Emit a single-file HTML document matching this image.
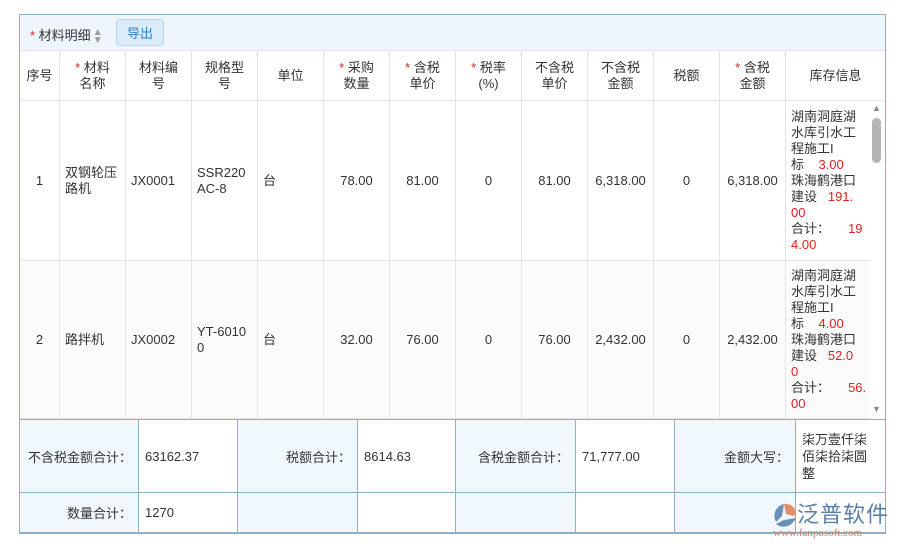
<!DOCTYPE html>
<html><head><meta charset="utf-8"><style>
*{margin:0;padding:0;box-sizing:border-box}
body{width:900px;height:547px;background:#fff;font-family:"Liberation Sans","Noto Sans CJK SC",sans-serif;font-size:13px;color:#333;position:relative;overflow:hidden}
.c{position:absolute;display:flex;align-items:center;padding:0 5px;line-height:16px;border-right:1px solid #e4e4e4;border-bottom:1px solid #e4e4e4}
.h{justify-content:center;text-align:center;top:51px;height:50px}
.r{color:#d22}
.s{color:#d22}
.ct{justify-content:center;text-align:center}
.f{position:absolute;display:flex;align-items:center;padding:0 6px;border-right:1px solid #8fb0c4;border-bottom:1px solid #8fb0c4}
.fl{background:#f0f7fd;justify-content:flex-end}
</style></head><body>
<div style="position:absolute;left:19px;top:14px;width:867px;height:520px;border:1px solid #8fb0c4"></div>
<div style="position:absolute;left:20px;top:15px;width:865px;height:36px;background:#eef5fd;border-bottom:1px solid #e4e4e4"></div>
<div style="position:absolute;left:30px;top:25px;font-size:13px"><span class="s">*</span> 材料明细<span style="color:#999;font-size:10px;display:inline-block;width:10px;line-height:8px;vertical-align:middle;margin-left:2px">▲<br>▼</span></div>
<div style="position:absolute;left:116px;top:19px;width:48px;height:27px;border:1px solid #b9d4ea;background:#dcebf8;border-radius:4px;color:#2f7fc9;display:flex;align-items:center;justify-content:center">导出</div>

<div class="c h" style="left:20px;width:40px"><div>序号</div></div>
<div class="c h" style="left:60px;width:66px"><div><span class="s">*</span> 材料<br>名称</div></div>
<div class="c h" style="left:126px;width:66px"><div>材料编<br>号</div></div>
<div class="c h" style="left:192px;width:66px"><div>规格型<br>号</div></div>
<div class="c h" style="left:258px;width:66px"><div>单位</div></div>
<div class="c h" style="left:324px;width:66px"><div><span class="s">*</span> 采购<br>数量</div></div>
<div class="c h" style="left:390px;width:66px"><div><span class="s">*</span> 含税<br>单价</div></div>
<div class="c h" style="left:456px;width:66px"><div><span class="s">*</span> 税率<br>(%)</div></div>
<div class="c h" style="left:522px;width:66px"><div>不含税<br>单价</div></div>
<div class="c h" style="left:588px;width:66px"><div>不含税<br>金额</div></div>
<div class="c h" style="left:654px;width:66px"><div>税额</div></div>
<div class="c h" style="left:720px;width:66px"><div><span class="s">*</span> 含税<br>金额</div></div>
<div class="c h" style="left:786px;width:99px;border-right:none"><div>库存信息</div></div>

<!-- row1 -->
<div class="c ct" style="left:20px;top:101px;width:40px;height:160px"><div>1</div></div>
<div class="c" style="left:60px;top:101px;width:66px;height:160px"><div>双钢轮压<br>路机</div></div>
<div class="c" style="left:126px;top:101px;width:66px;height:160px"><div>JX0001</div></div>
<div class="c" style="left:192px;top:101px;width:66px;height:160px"><div>SSR220<br>AC-8</div></div>
<div class="c" style="left:258px;top:101px;width:66px;height:160px"><div>台</div></div>
<div class="c ct" style="left:324px;top:101px;width:66px;height:160px"><div>78.00</div></div>
<div class="c ct" style="left:390px;top:101px;width:66px;height:160px"><div>81.00</div></div>
<div class="c ct" style="left:456px;top:101px;width:66px;height:160px"><div>0</div></div>
<div class="c ct" style="left:522px;top:101px;width:66px;height:160px"><div>81.00</div></div>
<div class="c ct" style="left:588px;top:101px;width:66px;height:160px"><div>6,318.00</div></div>
<div class="c ct" style="left:654px;top:101px;width:66px;height:160px"><div>0</div></div>
<div class="c ct" style="left:720px;top:101px;width:66px;height:160px"><div>6,318.00</div></div>
<div class="c" style="left:786px;top:101px;width:84px;height:160px;border-right:none"><div style="white-space:nowrap">湖南洞庭湖<br>水库引水工<br>程施工I<br>标&nbsp;&nbsp;&nbsp;&nbsp;<span class="r">3.00</span><br>珠海鹤港口<br>建设&nbsp;&nbsp;&nbsp;<span class="r">191.<br>00</span><br>合计：&nbsp;&nbsp;&nbsp;&nbsp;&nbsp;<span class="r">19<br>4.00</span></div></div>

<!-- row2 -->
<div style="position:absolute;left:20px;top:261px;width:850px;height:158px;background:#fbfbfb"></div>
<div class="c ct" style="left:20px;top:261px;width:40px;height:158px"><div>2</div></div>
<div class="c" style="left:60px;top:261px;width:66px;height:158px"><div>路拌机</div></div>
<div class="c" style="left:126px;top:261px;width:66px;height:158px"><div>JX0002</div></div>
<div class="c" style="left:192px;top:261px;width:66px;height:158px"><div>YT-6010<br>0</div></div>
<div class="c" style="left:258px;top:261px;width:66px;height:158px"><div>台</div></div>
<div class="c ct" style="left:324px;top:261px;width:66px;height:158px"><div>32.00</div></div>
<div class="c ct" style="left:390px;top:261px;width:66px;height:158px"><div>76.00</div></div>
<div class="c ct" style="left:456px;top:261px;width:66px;height:158px"><div>0</div></div>
<div class="c ct" style="left:522px;top:261px;width:66px;height:158px"><div>76.00</div></div>
<div class="c ct" style="left:588px;top:261px;width:66px;height:158px"><div>2,432.00</div></div>
<div class="c ct" style="left:654px;top:261px;width:66px;height:158px"><div>0</div></div>
<div class="c ct" style="left:720px;top:261px;width:66px;height:158px"><div>2,432.00</div></div>
<div class="c" style="left:786px;top:261px;width:84px;height:158px;border-right:none"><div style="white-space:nowrap">湖南洞庭湖<br>水库引水工<br>程施工I<br>标&nbsp;&nbsp;&nbsp;&nbsp;<span class="r">4.00</span><br>珠海鹤港口<br>建设&nbsp;&nbsp;&nbsp;<span class="r">52.0<br>0</span><br>合计：&nbsp;&nbsp;&nbsp;&nbsp;&nbsp;<span class="r">56.<br>00</span></div></div>

<!-- scrollbar -->
<div style="position:absolute;left:870px;top:101px;width:15px;height:318px;background:#fff"></div>
<div style="position:absolute;left:872px;top:103px;color:#888;font-size:9px">▲</div>
<div style="position:absolute;left:872px;top:404px;color:#888;font-size:9px">▼</div>
<div style="position:absolute;left:872px;top:118px;width:9px;height:45px;background:#b5b5b5;border-radius:5px"></div>

<!-- footer -->
<div style="position:absolute;left:20px;top:419px;width:865px;height:1px;background:#8fb0c4"></div>
<div class="f fl" style="left:20px;top:420px;width:119px;height:73px">不含税金额合计：</div>
<div class="f" style="left:139px;top:420px;width:99px;height:73px">63162.37</div>
<div class="f fl" style="left:238px;top:420px;width:120px;height:73px">税额合计：</div>
<div class="f" style="left:358px;top:420px;width:98px;height:73px">8614.63</div>
<div class="f fl" style="left:456px;top:420px;width:120px;height:73px">含税金额合计：</div>
<div class="f" style="left:576px;top:420px;width:99px;height:73px">71,777.00</div>
<div class="f fl" style="left:675px;top:420px;width:121px;height:73px">金额大写：</div>
<div class="f" style="left:796px;top:420px;width:89px;height:73px;line-height:17px;border-right:none">柒万壹仟柒佰柒拾柒圆整</div>
<div class="f fl" style="left:20px;top:493px;width:119px;height:40px">数量合计：</div>
<div class="f" style="left:139px;top:493px;width:99px;height:40px">1270</div>
<div class="f fl" style="left:238px;top:493px;width:120px;height:40px"></div>
<div class="f" style="left:358px;top:493px;width:98px;height:40px"></div>
<div class="f fl" style="left:456px;top:493px;width:120px;height:40px"></div>
<div class="f" style="left:576px;top:493px;width:99px;height:40px"></div>
<div class="f fl" style="left:675px;top:493px;width:121px;height:40px"></div>
<div class="f" style="left:796px;top:493px;width:89px;height:40px;border-right:none"></div>

<!-- logo -->
<svg style="position:absolute;left:770px;top:502px" width="30" height="28" viewBox="0 0 30 28"><path d="M14 2 C6 4 2 12 6 20 L12 14 Z" fill="#6a8fb5"/><path d="M14 2 C22 1 28 8 24 14 L16 12 Z" fill="#e58c6a"/><path d="M6 22 C12 27 22 25 26 16 L14 18 Z" fill="#6a8fb5"/></svg>
<div style="position:absolute;left:797px;top:500px;font-size:22px;color:#5a7fa8;letter-spacing:1px;font-family:'Noto Sans CJK SC',sans-serif;line-height:26px">泛普软件</div>
<div style="position:absolute;left:773px;top:527px;font-size:11px;color:#d08060;font-family:'Liberation Serif',serif;line-height:12px">www.fanpusoft.com</div>
</body></html>
